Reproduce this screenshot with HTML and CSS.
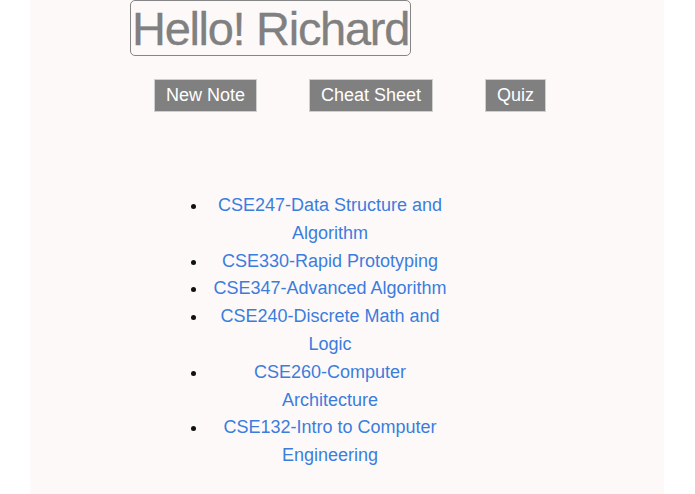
FILE: index.html
```html
<!DOCTYPE html>
<html lang="en">
<head>
    <meta charset="UTF-8">
    <meta name="viewport" content="width=device-width, initial-scale=1.0">
    <title>Notes</title>
    <link rel="stylesheet" href="styles.css">
</head>
<body>
    <div class="page">
        <h1 class="greeting">Hello! Richard</h1>

        <div class="actions">
            <button class="action-btn">New Note</button>
            <button class="action-btn">Cheat Sheet</button>
            <button class="action-btn">Quiz</button>
        </div>

        <ul class="course-list">
            <li><a href="#">CSE247-Data Structure and Algorithm</a></li>
            <li><a href="#">CSE330-Rapid Prototyping</a></li>
            <li><a href="#">CSE347-Advanced Algorithm</a></li>
            <li><a href="#">CSE240-Discrete Math and Logic</a></li>
            <li><a href="#">CSE260-Computer Architecture</a></li>
            <li><a href="#">CSE132-Intro to Computer Engineering</a></li>
        </ul>
    </div>
</body>
</html>
```

FILE: styles.css
```css
body {
    margin: 0;
    background-color: #ffffff;
    font-family: "Liberation Sans", Arial, sans-serif;
}

.page {
    margin: 0 31px 0 30px;
    min-height: 494px;
    background-color: #fdf9f9; /* 很浅的粉白色 */
    overflow: hidden;
}

.greeting {
    display: inline-block;
    margin: 0 0 0 100px;
    padding: 2px 1px 0;
    font-size: 47px;
    font-weight: normal;
    line-height: 52px;
    letter-spacing: -1.3px;
    color: #808080;
    -webkit-text-stroke: 0.3px #808080;
    border: 1px solid #858585;
    border-radius: 5px;
}

.actions {
    display: flex;
    gap: 52px;
    margin: 23px 0 0 124px;
}

.action-btn {
    height: 33px;
    padding: 0 11px;
    font-family: inherit;
    font-size: 18px;
    color: #ffffff;
    background-color: #808080;
    border: 1px solid #cfcfcf;
}

.course-list {
    width: 244px;
    margin: 80px 0 0 138px;
    padding-left: 40px;
    font-size: 18px;
    line-height: 27.8px;
    text-align: center;
}

.course-list li::marker {
    color: #111111;
}

.course-list a {
    color: #3b7ddd;
    text-decoration: none;
}
```
